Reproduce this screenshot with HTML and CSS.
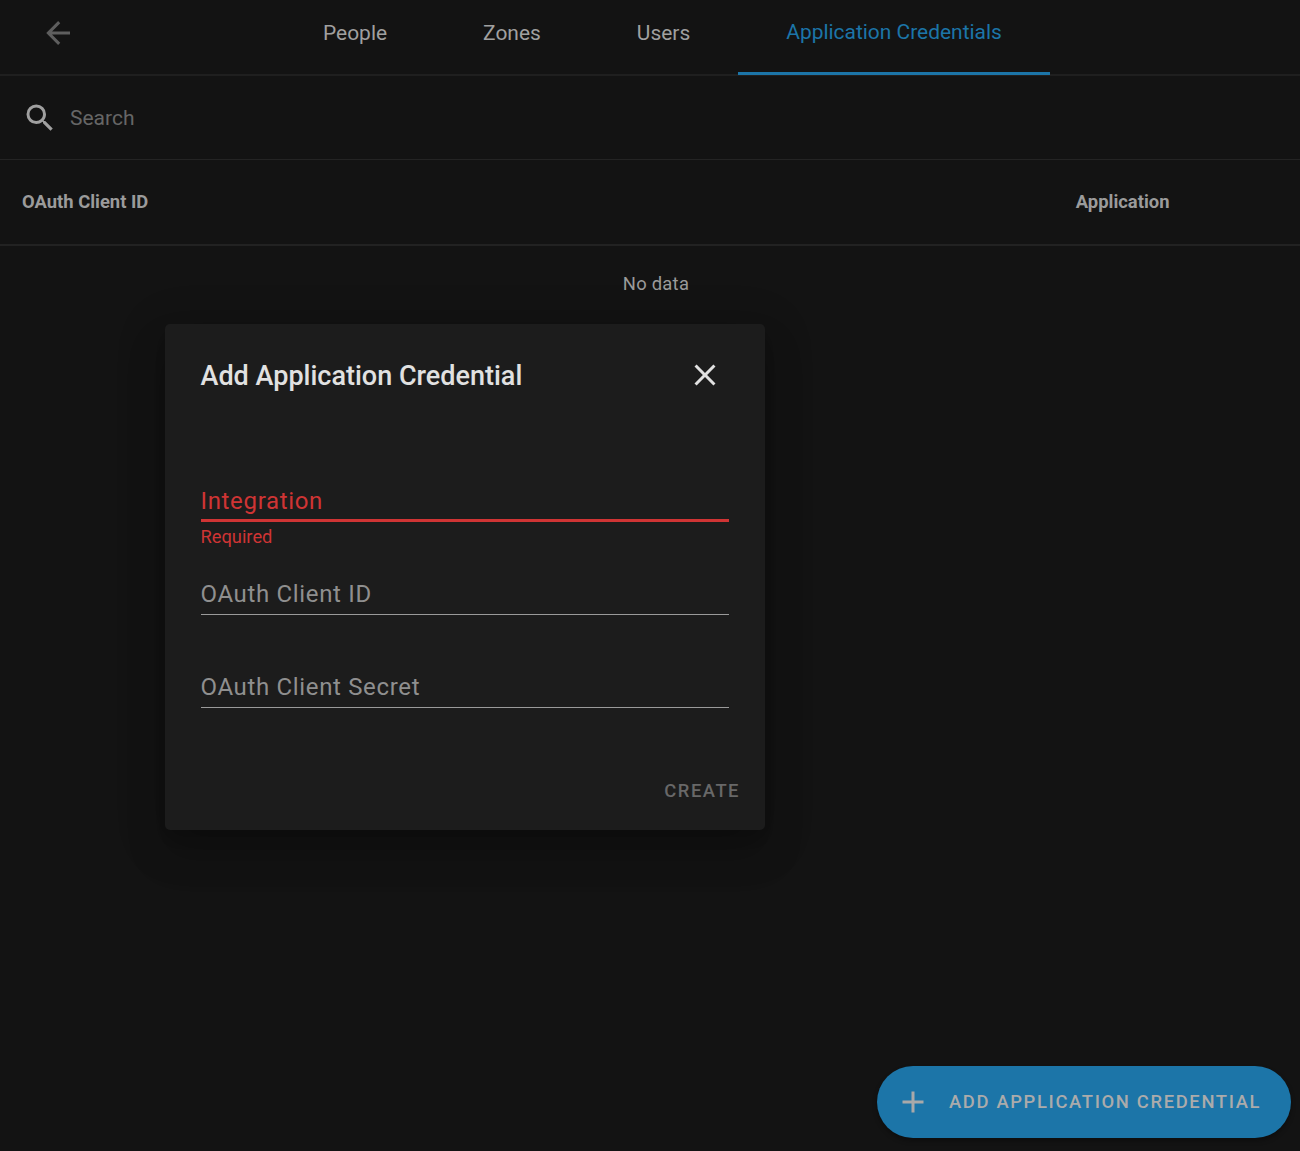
FILE: index.html
```html
<!DOCTYPE html>
<html lang="en">
<head>
<meta charset="utf-8">
<title>Application Credentials</title>
<link rel="stylesheet" href="styles.css">
</head>
<body>
<div class="page">
  <header class="topbar">
    <button class="back" aria-label="Back">
      <svg viewBox="0 0 24 24" width="36" height="36"><path d="M20 11v2H8l5.500 5.500-1.420 1.420L4.160 12l7.920-7.920L13.500 5.500 8 11h12z"/></svg>
    </button>
    <nav class="tabs">
      <a class="tab">People</a>
      <a class="tab">Zones</a>
      <a class="tab">Users</a>
      <a class="tab active">Application Credentials</a>
    </nav>
  </header>
  <div class="search">
    <svg viewBox="0 0 24 24" width="36" height="36"><path d="M9.500 3A6.500 6.500 0 0 1 16 9.500c0 1.610-.590 3.090-1.560 4.230l.270.270h.790l5 5-1.500 1.500-5-5v-.790l-.270-.270A6.516 6.516 0 0 1 9.500 16 6.500 6.500 0 0 1 3 9.500 6.500 6.500 0 0 1 9.500 3m0 2C7 5 5 7 5 9.500S7 14 9.500 14 14 12 14 9.500 12 5 9.500 5z"/></svg>
    <span class="search-text">Search</span>
  </div>
  <div class="thead">
    <span class="col-id">OAuth Client ID</span>
    <span class="col-app">Application</span>
  </div>
  <div class="nodata">No data</div>

  <section class="dialog">
    <div class="dialog-head">
      <h2>Add Application Credential</h2>
      <svg class="close" viewBox="0 0 24 24" width="36" height="36"><path d="M19 6.410 17.590 5 12 10.590 6.410 5 5 6.410 10.590 12 5 17.590 6.410 19 12 13.410 17.590 19 19 17.590 13.410 12 19 6.410z"/></svg>
    </div>
    <div class="field error">
      <div class="field-label">Integration</div>
      <div class="field-help">Required</div>
    </div>
    <div class="field">
      <div class="field-label">OAuth Client ID</div>
    </div>
    <div class="field">
      <div class="field-label">OAuth Client Secret</div>
    </div>
    <div class="dialog-actions"><span class="create">CREATE</span></div>
  </section>

  <button class="fab">
    <svg viewBox="0 0 24 24" width="36" height="36"><path d="M19 13h-6v6h-2v-6H5v-2h6V5h2v6h6v2z"/></svg>
    <span>ADD APPLICATION CREDENTIAL</span>
  </button>
</div>
</body>
</html>
```

FILE: styles.css
```css
* { box-sizing: border-box; }
html, body { margin: 0; padding: 0; height: 100%; }
body { background: #131313; font-family: Roboto, "Liberation Sans", sans-serif; overflow: hidden; }
.page { position: relative; width: 1300px; height: 1151px; background: #131313; color: #a0a0a0; }

.topbar { display: flex; height: 76px; border-bottom: 2px solid #1f1f1f; }
.back { width: 48px; height: 48px; margin: 9px 0 0 34px; padding: 0; background: none; border: 0; display: flex; align-items: center; justify-content: center; }
.back svg { fill: #5e5e5e; }
.tabs { display: flex; margin-left: 193px; height: 75px; }
.tab { display: block; padding: 20px 48px 0; font-size: 20.950px; line-height: 26px; color: #a0a0a0; height: 75px; }
.tab.active { color: #1c75a8; padding-top: 19px; border-bottom: 3px solid #1c75a8; }

.search { display: flex; align-items: center; height: 84px; padding-left: 22px; border-bottom: 1px solid #242424; }
.search svg { fill: #a0a0a0; flex: none; }
.search-text { margin-left: 12px; font-size: 21px; color: #666; }

.thead { display: flex; align-items: center; height: 86px; padding-bottom: 2px; border-bottom: 2px solid #222; font-size: 18.400px; font-weight: 700; color: #9b9b9b; }
.col-id { margin-left: 22px; }
.col-app { margin-left: auto; margin-right: 130.500px; }

.nodata { margin-top: 27px; text-align: center; font-size: 18.400px; letter-spacing: .25px; line-height: 22px; padding-left: 12px; color: #9b9b9b; }

.dialog { position: absolute; left: 165px; top: 324px; width: 600px; height: 506px; background: #1c1c1c; border-radius: 5px; box-shadow: 0 11px 15px -7px rgba(0,0,0,.2), 0 24px 38px 3px rgba(0,0,0,.14), 0 9px 46px 8px rgba(0,0,0,.12); padding: 0 36px; }
.dialog-head { display: flex; justify-content: space-between; align-items: center; height: 102px; }
.dialog-head h2 { margin: 1px 0 0 -.5px; font-size: 27px; font-weight: 500; line-height: 102px; color: #e1e1e1; }
.close { fill: #e1e1e1; margin-right: 6px; }

.field { height: 93px; }
.field-label { height: 54px; padding-top: 19px; border-bottom: 1px solid #9a9a9a; font-size: 24px; line-height: 28px; letter-spacing: .66px; color: #8f8f8f; margin-left: -.5px; }
.field.error { margin-top: 42px; }
.field.error .field-label { border-bottom: 3px solid #cf3434; color: #cf3434; }
.field-help { margin-top: 4px; font-size: 18.300px; line-height: 22px; color: #cf3434; margin-left: -.5px; }
.dialog-actions { position: absolute; right: 25px; bottom: 28px; }
.create { font-size: 18.400px; font-weight: 500; letter-spacing: 1.500px; color: #686868; line-height: 22px; }

.fab { position: absolute; left: 877px; top: 1066px; width: 414px; height: 72px; border: 0; border-radius: 36px; background: #1c75a8; color: #ababab; display: flex; align-items: center; padding: 0 0 2px 18px; font-family: inherit; box-shadow: 0 3px 5px rgba(0,0,0,.3); }
.fab svg { fill: #a9a9a9; flex: none; margin-top: 2px; }
.fab span { margin-left: 18px; font-size: 18.400px; font-weight: 500; letter-spacing: 1.650px; white-space: nowrap; }
```
